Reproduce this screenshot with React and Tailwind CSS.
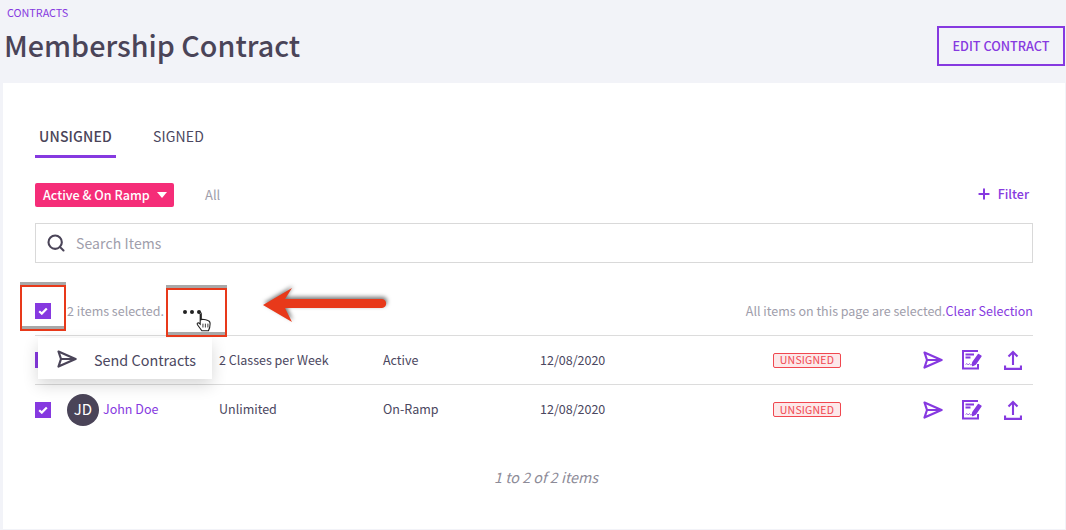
import { Search, Plus } from "lucide-react";

const font = "font-['Noto_Sans_CJK_SC','Source_Sans_Pro',sans-serif]";

function Check() {
  return (
    <span className="flex h-4 w-4 shrink-0 items-center justify-center bg-[#8639e0]">
      <svg width="10" height="8" viewBox="0 0 10 8" fill="none">
        <path d="M1.2 4.2L3.8 6.6L8.8 1.4" stroke="white" strokeWidth="2.2" />
      </svg>
    </span>
  );
}

function SendIcon({ className = "text-[#8639e0]" }) {
  return (
    <svg className={className} width="20" height="18" viewBox="0 0 20 18" fill="none" stroke="currentColor" strokeWidth="2.2" strokeLinejoin="round" strokeLinecap="round">
      <path d="M1.5 1.5L18.5 9L1.5 16.5L4 9Z" />
      <path d="M4 9H18.5" strokeWidth="1.8" />
    </svg>
  );
}

function SignIcon() {
  return (
    <svg width="20" height="20" viewBox="0 0 20 20" fill="none">
      <path d="M16 1H1V18.5H16V14" stroke="#8639e0" strokeWidth="2" />
      <path d="M3.5 4.5H12M3.5 7.5H8.5" stroke="#8639e0" strokeWidth="1.8" />
      <path d="M3.5 14.5L5 13.5L6 15L7.5 13.5L8.5 15L10 14" stroke="#8639e0" strokeWidth="0.7" />
      <path d="M16.5 4.5L19 6L13.5 14L10.5 15.5L10.8 12.5Z" fill="#8639e0" stroke="#8639e0" strokeWidth="1.4" strokeLinejoin="round" />
    </svg>
  );
}

function UploadIcon() {
  return (
    <svg width="18" height="20" viewBox="0 0 18 20" fill="none" stroke="#8639e0" strokeWidth="2.1">
      <path d="M9 15V2" />
      <path d="M4.5 6.5L9 2L13.5 6.5" />
      <path d="M1 15.5V18.8H17V15.5" strokeWidth="2.2" />
    </svg>
  );
}

function Row({ name, plan, status, divider }) {
  return (
    <div className={`grid h-[49px] grid-cols-[32px_152px_164px_157px_233px_150px_110px] items-center text-[12.5px] text-[#4b4760] ${divider ? "border-b border-[#dcdcdc]" : ""}`}>
      <Check />
      <div className="flex items-center gap-1">
        <span className="flex h-8 w-8 items-center justify-center rounded-full bg-[#4a4458] text-[15px] text-white">JD</span>
        <span className="text-[#8639e0]">{name}</span>
      </div>
      <span>{plan}</span>
      <span>{status}</span>
      <span>12/08/2020</span>
      <div className="flex items-center">
        <span className="flex h-[15px] w-[68px] items-center justify-center rounded-[2px] border border-[#f0474f] bg-[#fde8e9] text-[10.5px] tracking-[0.2px] text-[#f0474f]">UNSIGNED</span>
      </div>
      <div className="flex items-center">
        <SendIcon />
        <span className="ml-[19px]"><SignIcon /></span>
        <span className="ml-[22px]"><UploadIcon /></span>
      </div>
    </div>
  );
}

export default function App() {
  return (
    <div className={`${font} relative h-[530px] w-[1066px] overflow-hidden bg-[#f2f3f8]`}>
      <header className="relative h-[83px]">
        <p className="pl-[7px] pt-[5px] text-[10.8px] leading-[14px] text-[#8639e0]">CONTRACTS</p>
        <h1 className="pl-1 pt-[7px] text-[28.7px] font-medium leading-[38px] text-[#4a4458]">Membership Contract</h1>
        <button className="absolute right-[1px] top-[26px] h-10 w-[128px] border-2 border-[#8639e0] text-[12.7px] font-medium text-[#8639e0]">EDIT CONTRACT</button>
      </header>

      <main className="relative ml-[3px] mr-[1px] h-[446px] bg-white px-8">
        <nav className="flex h-[75px] items-end text-[14px] tracking-[0.15px]">
          <span className="flex h-[30px] w-[81px] items-start justify-center border-b-[3px] border-[#8639e0] font-medium leading-4 text-[#4a4458]">UNSIGNED</span>
          <span className="ml-[37px] h-[30px] leading-4 text-[#4b4760]">SIGNED</span>
        </nav>

        <div className="mt-[25px] flex h-6 items-center text-[13px]">
          <span className="flex h-6 w-[139px] items-center gap-[7px] whitespace-nowrap rounded-[2px] bg-[#f52d78] pl-2 text-[12.6px] font-medium text-white">
            Active &amp; On Ramp
            <span className="h-0 w-0 border-x-[5px] border-t-[6px] border-x-transparent border-t-white" />
          </span>
          <span className="ml-[31px] text-[#a09eab]">All</span>
          <span className="ml-auto mr-1 flex -translate-y-px items-center gap-[6px] text-[12.5px] font-medium text-[#8639e0]">
            <Plus size={16} strokeWidth={3} />
            Filter
          </span>
        </div>

        <div className="mt-4 flex h-10 items-center gap-[10px] border border-[#d9d9d9] pl-[10px] text-[14px] tracking-[0.1px] text-[#a09eab]">
          <Search size={20} strokeWidth={2.5} className="text-[#4a4458]" />
          Search Items
        </div>

        <div className="flex h-[73px] items-end border-b border-[#dcdcdc] pb-4 text-[12.5px] leading-4 text-[#a09eab]">
          <Check />
          <span className="ml-4 w-[116px]">2 items selected.</span>
          <span className="mb-[5px] flex gap-[3px]">
            <i className="h-1 w-1 rounded-full bg-[#222]" />
            <i className="h-1 w-1 rounded-full bg-[#222]" />
            <i className="h-1 w-1 rounded-full bg-[#222]" />
          </span>
          <span className="ml-auto">All items on this page are selected.<span className="text-[#8639e0]">Clear Selection</span></span>
        </div>

        <Row name="John Doe" plan="2 Classes per Week" status="Active" divider />
        <Row name="John Doe" plan="Unlimited" status="On-Ramp" />

        <p className="mt-[32px] pl-6 text-center text-[14.3px] italic text-[#8d8b98]">1 to 2 of 2 items</p>

        {/* dropdown over the first row */}
        <div className="absolute left-[35px] top-[255px] flex h-[41px] w-[174px] items-center bg-white pl-[19px] text-[14.4px] text-[#4b4760] shadow-[0_6px_16px_rgba(0,0,0,0.16)]">
          <SendIcon className="text-[#4a4458]" />
          <span className="ml-[17px] pt-[2px]">Send Contracts</span>
        </div>
      </main>

      {/* annotations drawn on top of the screenshot */}
      <div className="absolute left-[20px] top-[285px] h-[46px] w-[46px] border-2 border-[#e8391a] shadow-[0_-3px_0_#a8a8a8,inset_0_-3px_0_#a8a8a8]" />
      <div className="absolute left-[166px] top-[288px] h-[49px] w-[61px] border-2 border-[#e8391a] shadow-[0_-3px_0_#a8a8a8,inset_0_-3px_0_#a8a8a8]" />
      <svg className="absolute left-[194px] top-[311px]" width="19" height="22" viewBox="0 0 16 20" fill="white" stroke="#222" strokeWidth="1">
        <path d="M4 1.5C5 .8 6 1.3 6 2.5V8L7 7.6L8.5 7.7L10 8L12 8.6C13.5 9 14 10 14 11.5C14 14 13.5 16 12.5 18H6.5L2.5 12.5C1.8 11.5 2.8 10.3 4 11L5 12V3Z" />
        <path d="M7.5 11.5V15M9.7 11.5V15M12 11.5V15" strokeWidth="0.8" />
      </svg>
      <svg className="absolute left-[258px] top-[282px] drop-shadow-[1px_-2px_2px_rgba(0,0,0,0.55)]" width="134" height="44" viewBox="0 0 134 44">
        <path d="M5 23L34 6L27 17H124C129.5 17 129.5 26 124 26H27L34 40Z" fill="#e8391a" />
      </svg>
    </div>
  );
}
